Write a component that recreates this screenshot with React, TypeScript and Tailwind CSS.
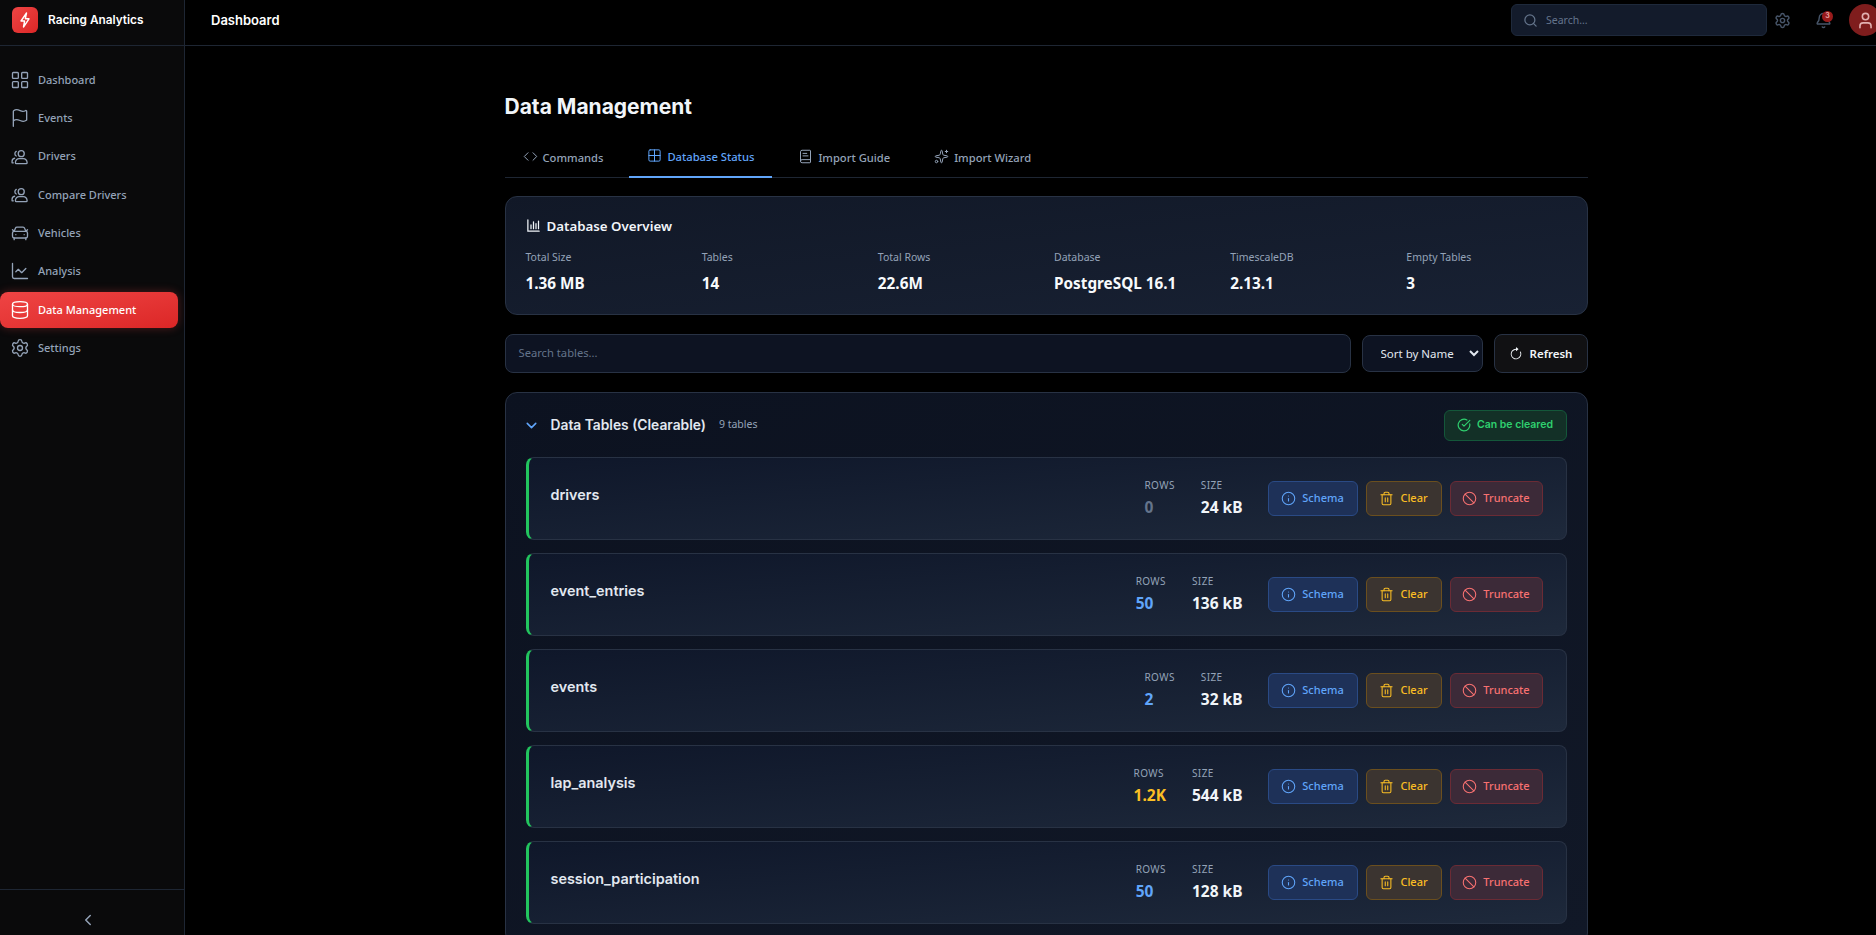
import {
  Ban,
  BookText,
  ChartLine,
  ChevronDown,
  ChevronLeft,
  CircleCheckBig,
  Code,
  Database,
  Grid2x2,
  Info,
  Search,
  Settings,
  Sparkles,
  Bell,
  User,
  Trash2,
  CarFront,
  Flag,
  LayoutGrid,
} from "lucide-react";
import { BsArrowClockwise } from "react-icons/bs";

const noto = "font-['Noto_Sans',sans-serif]";

const UsersIcon = ({ className }: { className?: string }) => (
  <svg viewBox="0 0 24 24" fill="none" stroke="currentColor" strokeWidth="1.6" strokeLinecap="round" strokeLinejoin="round" className={className}>
    <circle cx="13.5" cy="8" r="3.6" />
    <path d="M6.5 19v-.5a4.5 4.5 0 0 1 4.5-4.5h5a4.5 4.5 0 0 1 4.5 4.5v.5a1 1 0 0 1-1 1h-12a1 1 0 0 1-1-1z" />
    <path d="M7.5 5.2a3.2 3.2 0 0 0 0 5.6" />
    <path d="M5.5 13.5A3.6 3.6 0 0 0 2.5 17v2h1.5" />
  </svg>
);

const BoltIcon = ({ className }: { className?: string }) => (
  <svg viewBox="0 0 12 16" fill="none" stroke="currentColor" strokeWidth="1.4" strokeLinejoin="round" className={className}>
    <path d="M7.5 1 2 9h3.6L4.5 15 10 6.8H6.3L7.5 1z" />
  </svg>
);

const BarsIcon = ({ className }: { className?: string }) => (
  <svg viewBox="0 0 24 24" fill="none" stroke="currentColor" strokeWidth="2" strokeLinecap="round" className={className}>
    <path d="M3 3v18h18" />
    <path d="M8 17v-6M12 17V6M16 17V9M20 17V5" />
  </svg>
);

const navItems = [
  { label: "Dashboard", icon: LayoutGrid },
  { label: "Events", icon: Flag },
  { label: "Drivers", icon: UsersIcon },
  { label: "Compare Drivers", icon: UsersIcon },
  { label: "Vehicles", icon: CarFront },
  { label: "Analysis", icon: ChartLine },
  { label: "Data Management", icon: Database, active: true },
  { label: "Settings", icon: Settings },
];

const tabs = [
  { label: "Commands", icon: Code },
  { label: "Database Status", icon: Grid2x2, active: true },
  { label: "Import Guide", icon: BookText },
  { label: "Import Wizard", icon: Sparkles },
];

const stats = [
  ["Total Size", "1.36 MB"],
  ["Tables", "14"],
  ["Total Rows", "22.6M"],
  ["Database", "PostgreSQL 16.1"],
  ["TimescaleDB", "2.13.1"],
  ["Empty Tables", "3"],
];

const tables = [
  { name: "drivers", rows: "0", size: "24 kB", color: "text-[#64748b]" },
  { name: "event_entries", rows: "50", size: "136 kB", color: "text-[#60a5fa]" },
  { name: "events", rows: "2", size: "32 kB", color: "text-[#60a5fa]" },
  { name: "lap_analysis", rows: "1.2K", size: "544 kB", color: "text-[#fbbf24]" },
  { name: "session_participation", rows: "50", size: "128 kB", color: "text-[#60a5fa]" },
];

const Sidebar = () => (
  <aside className="w-[185px] h-full shrink-0 flex flex-col bg-[#0a0a0b] border-r border-[#1e2633]">
    <div className="h-[46px] flex items-center gap-[10px] pl-3 pb-[5px] border-b border-[#1e2633]">
      <div className="w-[26px] h-[26px] rounded-md bg-gradient-to-br from-[#ef4444] to-[#dc2626] flex items-center justify-center">
        <BoltIcon className="w-[12px] h-[16px] text-white" />
      </div>
      <span className="text-[11.8px] font-semibold text-white mt-[1px]">Racing Analytics</span>
    </div>
    <nav className="flex-1 pt-[16px] pr-[6px] flex flex-col gap-[2.3px]">
      {navItems.map((item) => {
        const Icon = item.icon;
        return (
          <div
            key={item.label}
            className={
              item.active
                ? "h-[36px] flex items-center gap-[8px] pl-[10px] rounded-lg bg-gradient-to-br from-[#ef4444] to-[#dc2626] text-white shadow-[0_0_10px_rgba(239,68,68,0.3)]"
                : "h-[36px] flex items-center gap-[8px] pl-[10px] text-[#94a3b8]"
            }
          >
            <Icon className="w-[20px] h-[20px] shrink-0" strokeWidth={1.6} />
            <span className={`text-[11px] font-medium ${noto}`}>{item.label}</span>
          </div>
        );
      })}
    </nav>
    <div className="h-[46px] border-t border-[#1e2633] flex justify-center pt-[21px] pr-[9px]">
      <ChevronLeft className="w-[18px] h-[18px] text-[#94a3b8]" />
    </div>
  </aside>
);

const Header = () => (
  <header className="h-[46px] shrink-0 flex items-center justify-between px-[26px] pb-[5px] border-b border-[#1e2633]">
    <span className="text-[13px] font-semibold text-white mt-[2px]">Dashboard</span>
    <div className="flex items-center">
      <div className="w-[256px] h-[32px] rounded-md bg-[#131b2b] border border-[#1e293b] flex items-center pl-[11px] gap-[8px]">
        <Search className="w-[15px] h-[15px] text-[#64748b]" />
        <span className={`text-[10.5px] text-[#64748b] mt-[1px] ${noto}`}>Search...</span>
      </div>
      <Settings className="w-[17px] h-[17px] text-[#475569] ml-[7px]" />
      <div className="relative ml-[24px]">
        <Bell className="w-[17px] h-[17px] text-[#475569]" />
        <span className="absolute top-[-1px] right-[-1px] w-[11px] h-[11px] rounded-full bg-[#991b1b] text-[7px] font-bold text-[#e2a0a0] flex items-center justify-center">
          3
        </span>
      </div>
      <div className="w-[32px] h-[32px] rounded-full bg-[#7f1d1d] flex items-center justify-center ml-[17px]">
        <User className="w-[19px] h-[19px] text-[#e2b0b0]" />
      </div>
    </div>
  </header>
);

const TableRow = ({ name, rows, size, color }: { name: string; rows: string; size: string; color: string }) => (
  <div className="h-[83px] shrink-0 flex justify-between pl-[22px] pr-[23px] pt-[23px] rounded-lg border border-[#283244] border-l-[3px] border-l-[#22c55e] bg-gradient-to-br from-[#0f172a] to-[#1e293b]">
    <div className="text-[14.4px] font-semibold text-[#e2e8f0] leading-[22px] pt-[3px]">{name}</div>
    <div className="flex items-start">
      <div className={`flex gap-[26px] -mt-[5px] ${noto}`}>
        <div className="flex flex-col items-start">
          <span className="text-[10px] tracking-[0.4px] text-[#94a3b8] leading-[18px]">ROWS</span>
          <span className={`text-[15.5px] font-bold leading-[26px] ${color}`}>{rows}</span>
        </div>
        <div className="flex flex-col items-start">
          <span className="text-[10px] tracking-[0.4px] text-[#94a3b8] leading-[18px]">SIZE</span>
          <span className="text-[15.5px] font-bold leading-[26px] text-[#f1f5f9]">{size}</span>
        </div>
      </div>
      <div className={`flex gap-2 ml-[25px] ${noto}`}>
        <button className="w-[90px] h-[35px] rounded-md flex items-center justify-center gap-[6px] text-[11px] font-medium bg-[#1e3158] border border-[#2a4a85] text-[#60a5fa]">
          <Info className="w-[15px] h-[15px]" strokeWidth={1.7} />
          Schema
        </button>
        <button className="w-[76px] h-[35px] rounded-md flex items-center justify-center gap-[6px] text-[11px] font-medium bg-[#3b3430] border border-[#6b4f1e] text-[#fbbf24]">
          <Trash2 className="w-[15px] h-[15px]" strokeWidth={1.7} />
          Clear
        </button>
        <button className="w-[93px] h-[35px] rounded-md flex items-center justify-center gap-[6px] text-[11px] font-medium bg-[#3c2a38] border border-[#6b2b35] text-[#f87171]">
          <Ban className="w-[15px] h-[15px]" strokeWidth={1.7} />
          Truncate
        </button>
      </div>
    </div>
  </div>
);

const App = () => {
  return (
    <div className="w-screen h-screen overflow-hidden flex bg-black font-['Inter',sans-serif]">
      <Sidebar />
      <main className="w-[1722px] shrink-0 flex flex-col h-full">
        <Header />
        <div className="w-[1083px] mx-auto">
          <h1 className="text-[21px] font-bold text-[#f1f5f9] leading-[28px] mt-[47px]">Data Management</h1>

          {/* Tabs */}
          <div className="flex gap-2 mt-[14px] h-[43px] border-b border-[#1e2633]">
            {tabs.map((tab) => {
              const Icon = tab.icon;
              return (
                <div
                  key={tab.label}
                  className={
                    tab.active
                      ? `h-[43px] px-[18px] pt-[4px] flex items-center gap-[5px] text-[11.2px] font-medium text-[#60a5fa] border-b-2 border-[#60a5fa] ${noto}`
                      : `h-[43px] px-[18px] pt-[4px] flex items-center gap-[5px] text-[11.2px] font-medium text-[#94a3b8] ${noto}`
                  }
                >
                  <Icon className="w-[15px] h-[15px] -mt-[5px]" strokeWidth={1.6} />
                  {tab.label}
                </div>
              );
            })}
          </div>

          {/* Overview */}
          <section className="mt-[18px] h-[119px] rounded-xl border border-[#283244] bg-gradient-to-br from-[#111827] to-[#182133] px-5 pt-[20px]">
            <div className="flex items-center gap-[6px] text-[#f1f5f9]">
              <BarsIcon className="w-[15px] h-[15px] -mt-[3px]" />
              <span className={`text-[13.3px] font-semibold ${noto}`}>Database Overview</span>
            </div>
            <div className={`grid grid-cols-6 gap-4 mt-[13px] ${noto}`}>
              {stats.map(([label, value]) => (
                <div key={label}>
                  <div className="text-[10.5px] leading-[14px] text-[#94a3b8]">{label}</div>
                  <div className="text-[15.3px] font-bold text-[#f8fafc] leading-[22px] mt-[8px]">{value}</div>
                </div>
              ))}
            </div>
          </section>

          {/* Toolbar */}
          <div className={`flex items-center gap-[11px] mt-[19px] ${noto}`}>
            <div className="flex-1 h-[39px] rounded-lg border border-[#283244] bg-[#0d1322] flex items-center pl-[13px] text-[11.2px] text-[#64748b]">
              Search tables...
            </div>
            <select className="w-[121px] h-[37px] rounded-lg border border-[#283244] bg-[#0d1322] text-[11.5px] text-[#e2e8f0] pl-[14px] [color-scheme:dark]">
              <option>Sort by Name</option>
            </select>
            <button className="w-[94px] h-[39px] rounded-lg border border-[#283244] bg-[#111113] flex items-center justify-center gap-[7px] text-[11.5px] font-semibold text-[#f1f5f9]">
              <BsArrowClockwise className="w-[14px] h-[14px]" />
              Refresh
            </button>
          </div>

          {/* Data tables */}
          <section className="mt-[19px] rounded-xl border border-[#283244] bg-gradient-to-br from-[#0c1220] to-[#111827] px-5 pt-[16px] pb-5">
            <div className="flex items-center h-[32px]">
              <ChevronDown className="w-[17px] h-[17px] text-[#60a5fa] -ml-[3px]" strokeWidth={2.2} />
              <span className="ml-[11px] text-[13.8px] font-semibold text-[#e2e8f0]">Data Tables (Clearable)</span>
              <span className={`ml-[13px] text-[10.5px] text-[#94a3b8] ${noto}`}>9 tables</span>
              <span className="ml-auto w-[123px] h-[31px] rounded-md bg-[#133027] border border-[#14573a] flex items-center justify-center gap-[6px] text-[10.5px] font-semibold text-[#2fd06f]">
                <CircleCheckBig className="w-[14px] h-[14px]" />
                Can be cleared
              </span>
            </div>
            <div className="flex flex-col gap-[13px] mt-[16px]">
              {tables.map((t) => (
                <TableRow key={t.name} {...t} />
              ))}
            </div>
          </section>
        </div>
      </main>
    </div>
  );
};

export default App;
